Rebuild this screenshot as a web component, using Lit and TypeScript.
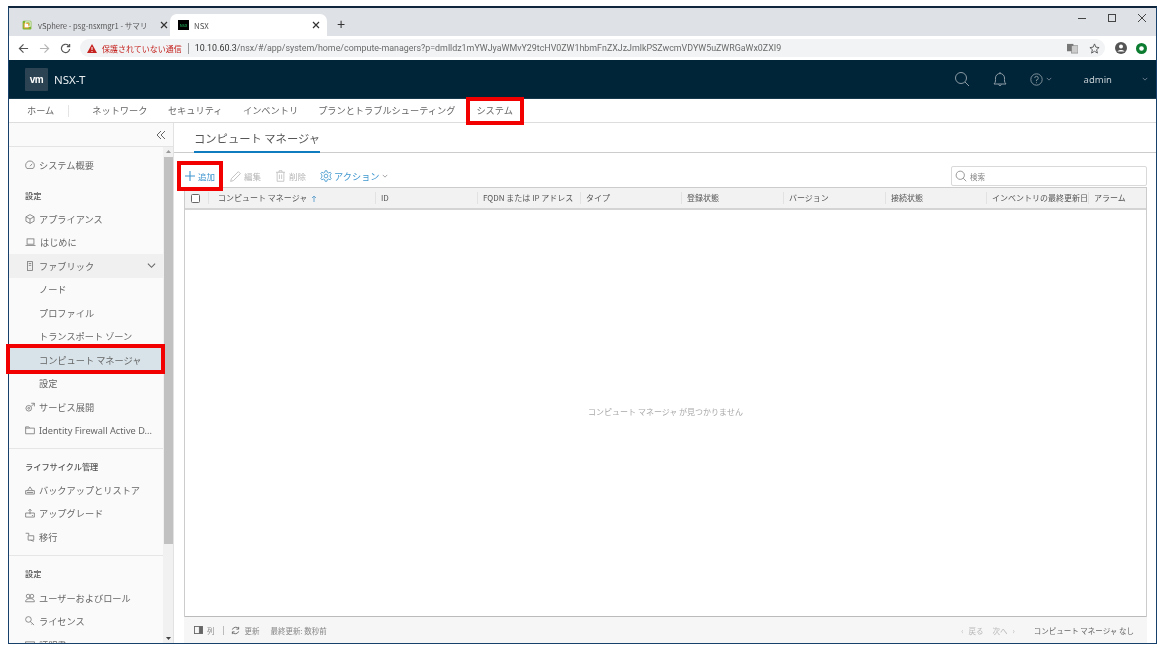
import { LitElement, html, css } from "lit";
import { customElement } from "lit/decorators.js";

const icons = {
  gauge: html`<svg class="ic" width="10" height="10" viewBox="0 0 16 16" fill="none" stroke="currentColor" stroke-width="1.3"><path d="M3 13.5A7 7 0 1 1 13 13.5Z"/><path d="M8 10 L11.5 6"/></svg>`,
  box: html`<svg class="ic" width="10" height="10" viewBox="0 0 16 16" fill="none" stroke="currentColor" stroke-width="1.3"><path d="M8 1 14.5 4.5V11.5L8 15 1.5 11.5V4.5Z"/><path d="M1.5 4.5 8 8 14.5 4.5M8 8V15"/></svg>`,
  laptop: html`<svg class="ic" width="11" height="10" viewBox="0 0 16 16" fill="none" stroke="currentColor" stroke-width="1.3"><rect x="2.5" y="3" width="11" height="8.5"/><path d="M0 13.5H16"/></svg>`,
  fabric: html`<svg class="ic" width="10" height="10" viewBox="0 0 16 16" fill="none" stroke="currentColor" stroke-width="1.3"><rect x="4" y="1" width="8" height="14"/><path d="M6 4H10M6 7H10M8 12V12.5"/></svg>`,
  svc: html`<svg class="ic" width="10" height="10" viewBox="0 0 16 16" fill="none" stroke="currentColor" stroke-width="1.3"><circle cx="6" cy="10" r="4.5"/><circle cx="6" cy="10" r="1.5"/><path d="M10 2H15V7M15 2 10 7"/></svg>`,
  folder: html`<svg class="ic" width="10" height="10" viewBox="0 0 16 16" fill="none" stroke="currentColor" stroke-width="1.3"><path d="M1 3H6L7.5 5H15V14H1Z"/><path d="M1 5H7.5"/></svg>`,
  backup: html`<svg class="ic" width="10" height="10" viewBox="0 0 16 16" fill="none" stroke="currentColor" stroke-width="1.3"><path d="M1 9H15V14.5H1Z"/><path d="M4 9 8 3 12 9M3 12H13"/></svg>`,
  upgrade: html`<svg class="ic" width="10" height="10" viewBox="0 0 16 16" fill="none" stroke="currentColor" stroke-width="1.3"><path d="M1 8H15V14.5H1Z"/><path d="M8 2V10M5.5 4.5 8 2 10.5 4.5M11 12H13"/></svg>`,
  migrate: html`<svg class="ic" width="10" height="10" viewBox="0 0 16 16" fill="none" stroke="currentColor" stroke-width="1.3"><path d="M1 2H6V5M5 6H14V13H5ZM9 13 14 15"/></svg>`,
  users: html`<svg class="ic" width="10" height="10" viewBox="0 0 16 16" fill="none" stroke="currentColor" stroke-width="1.3"><circle cx="5" cy="5" r="3"/><circle cx="11" cy="5" r="3"/><path d="M1 14C1 10 4 9 8 9S15 10 15 14Z"/></svg>`,
  key: html`<svg class="ic" width="10" height="10" viewBox="0 0 16 16" fill="none" stroke="currentColor" stroke-width="1.3"><circle cx="5.5" cy="5.5" r="4.5"/><path d="M8.5 9 14.5 14.5M12 12 10.5 13.5"/></svg>`,
  cert: html`<svg class="ic" width="10" height="10" viewBox="0 0 16 16" fill="none" stroke="currentColor" stroke-width="1.3"><rect x="1" y="3" width="14" height="10"/></svg>`,
};

const closeX = html`<svg class="x" width="8" height="8" viewBox="0 0 8 8" fill="none" stroke="#333" stroke-width="1.2"><path d="M1 1 7 7M7 1 1 7"/></svg>`;

type Row = { t: string; i?: unknown; cls?: string; chev?: boolean };
const rows: Row[] = [
  { t: "システム概要", i: icons.gauge },
  { t: "設定", cls: "head gap" },
  { t: "アプライアンス", i: icons.box },
  { t: "はじめに", i: icons.laptop },
  { t: "ファブリック", i: icons.fabric, cls: "open", chev: true },
  { t: "ノード", cls: "sub" },
  { t: "プロファイル", cls: "sub" },
  { t: "トランスポート ゾーン", cls: "sub" },
  { t: "コンピュート マネージャ", cls: "sub on" },
  { t: "設定", cls: "sub" },
  { t: "サービス展開", i: icons.svc },
  { t: "Identity Firewall Active D...", i: icons.folder, cls: "latin" },
  { t: "ライフサイクル管理", cls: "head rule" },
  { t: "バックアップとリストア", i: icons.backup },
  { t: "アップグレード", i: icons.upgrade },
  { t: "移行", i: icons.migrate },
  { t: "設定", cls: "head rule two" },
  { t: "ユーザーおよびロール", i: icons.users },
  { t: "ライセンス", i: icons.key },
  { t: "証明書", i: icons.cert },
];

const cols = ["ID", "FQDN または IP アドレス", "タイプ", "登録状態", "バージョン", "接続状態", "インベントリの最終更新日", "アラーム"];

@customElement("app-root")
export class AppRoot extends LitElement {
  static styles = css`
    :host { display: block; width: 1165px; height: 652px; background: #fff; position: relative; overflow: hidden;
      font-family: "Noto Sans CJK JP", "Noto Sans", sans-serif; color: #565656; }
    * { box-sizing: border-box; }
    .page { padding: 6px 8px 8px; height: 652px; }
    .win { height: 638px; display: flex; flex-direction: column; border: 1px solid #17406a; border-top: 2px solid #10263c; overflow: hidden; filter: blur(0.4px); background: #fff; }
    .ic { flex: none; display: block; }

    .tabs { height: 28px; background: #dee1e6; display: flex; align-items: flex-end; flex: none; padding-left: 4px; }
    .tab { height: 22px; display: flex; align-items: center; font-size: 7.6px; color: #555; white-space: nowrap; }
    .tab.a { width: 161px; padding: 0 0 0 9px; }
    .tab.b { width: 157px; background: #fff; border-radius: 7px 7px 0 0; padding: 0 0 0 8px; margin-left: -4px; font-size: 7.8px; }
    .fav { width: 10px; height: 10px; margin-right: 6px; flex: none; }
    .fav.n { background: #000; width: 11px; height: 10px; margin-right: 5px; color: #2c6; font-size: 4px; line-height: 10px; text-align: center; overflow: hidden; }
    .tab .x { margin-left: auto; flex: none; }
    .tab.a .x { margin-right: 6px; }
    .tab.b .x { margin-right: 7px; }
    .plus { font-size: 14px; color: #333; margin: 0 0 3px 10px; line-height: 18px; font-family: "Liberation Sans", sans-serif; }
    .winbtns { margin-left: auto; display: flex; align-self: stretch; align-items: flex-start; gap: 20px; padding: 5px 9px 0 0; color: #444; }

    .addr { height: 24px; flex: none; display: flex; align-items: center; padding-left: 9px; background: #fff; color: #666; }
    .navi { display: flex; gap: 10px; align-items: center; width: 62px; }
    .pill { width: 1025px; height: 18px; border-radius: 9px; background: #f1f3f4; display: flex; align-items: center; padding: 0 0 0 7px; font-size: 8.9px; font-family: "Roboto", "Noto Sans CJK JP", sans-serif; color: #6a6a6a; white-space: nowrap; }
    .warn { color: #c5221f; font-size: 8px; margin: 0 6px 0 5px; font-family: "Noto Sans CJK JP", sans-serif; }
    .sep { width: 1px; height: 11px; background: #999; margin-right: 6px; }
    .host { color: #333; }
    .pill .end { margin-left: auto; display: flex; gap: 11px; align-items: center; padding-right: 5px; color: #555; }
    .prof { margin-left: 10px; display: flex; gap: 9px; align-items: center; }

    .hdr { height: 39px; flex: none; background: #002538; border-bottom: 1px solid #16394c; display: flex; align-items: center; padding-left: 16px; color: #fff; }
    .logo { width: 23px; height: 23px; background: #2b4352; border-radius: 1px; font: 700 10px/23px "Liberation Sans", sans-serif; text-align: center; letter-spacing: -0.5px; }
    .brand { font: 11.5px "Noto Sans", sans-serif; margin-left: 6px; color: #e8edf0; }
    .hr { margin-left: auto; display: flex; align-items: center; color: #8c9ba5; }
    .hr .user { font: 9.5px "Noto Sans", sans-serif; margin: 0 0 0 32px; color: #c5ced4; }
    .ml22 { margin-left: 22px; }
    .ml3 { margin-left: 3px; }
    .last { margin: 0 8px 0 30px; }

    .nav { height: 24px; flex: none; display: flex; align-items: stretch; border-bottom: 1px solid #ddd; background: #fff; padding-left: 18px; font-size: 9.2px; color: #666; }
    .nav span { display: flex; align-items: center; margin-right: 21px; white-space: nowrap; border-bottom: 1px solid transparent; }
    .nav .home { padding-right: 15px; margin-right: 23px; position: relative; }
    .nav .home::after { content: ""; position: absolute; right: 0; top: 6px; height: 12px; width: 1px; background: #e4e4e4; }
    .nav .net { margin-right: 20.5px; }
    .nav .sec { margin-right: 20.5px; }
    .nav .inv { margin-right: 20px; }
    .nav .sel { border-bottom: 1px solid #6da7d0; padding: 0 2px; margin-left: -2px; }

    .body { flex: 1; min-height: 0; display: flex; }
    .side { width: 165px; flex: none; background: #fafafa; border-right: 1px solid #e2e2e2; display: flex; flex-direction: column; }
    .col { height: 24px; flex: none; border-bottom: 1px solid #e4e4e4; display: flex; justify-content: flex-end; align-items: center; padding-right: 7px; color: #666; }
    .sc { flex: 1; min-height: 0; display: flex; }
    .list { flex: 1; min-width: 0; padding-top: 6.5px; font-size: 9.2px; overflow: hidden; }
    .r { height: 23.5px; display: flex; align-items: center; padding-left: 16px; gap: 4px; white-space: nowrap; color: #666; }
    .r .ic { color: #777; }
    .r.sub { padding-left: 30px; }
    .r.head { font-size: 8.2px; font-weight: 500; color: #555; }
    .r.head.gap { margin-top: 6.5px; }
    .r.head.rule { margin-top: 11.5px; height: 24.5px; position: relative; }
    .r.head.rule.two { margin-top: 12px; height: 25.5px; }
    .r.head.rule::before { content: ""; position: absolute; left: 0; right: 0; top: -6px; height: 1px; background: #e6e6e6; }
    .r.open { background: #f0f0f0; padding-right: 7px; }
    .r.on { background: #d8e3e9; }
    .r.latin { font-family: "Noto Sans", sans-serif; font-size: 9.2px; }
    .r .chev { margin-left: auto; color: #666; }
    .sb { width: 10px; flex: none; background: #f1f1f1; display: flex; flex-direction: column; align-items: center; }
    .sb .arr { height: 10px; flex: none; }
    .sb .th { width: 9px; height: 387px; background: #c1c1c1; }
    .sb .sp { flex: 1; }

    .main { flex: 1; min-width: 0; display: flex; flex-direction: column; background: #fff; padding-top: 6px; }
    .tb { height: 24px; flex: none; border-bottom: 1px solid #ccc; padding-left: 20px; display: flex; }
    .tb span { font-size: 11.3px; color: #565656; border-bottom: 2px solid #0f7cc0; height: 24px; line-height: 18px; margin-bottom: -1px; white-space: nowrap; width: 126px; }
    .tools { height: 34px; flex: none; display: flex; align-items: center; padding: 13px 9px 1px 11px; font-size: 8.5px; gap: 14px; }
    .t { display: flex; align-items: center; gap: 3px; color: #b5b5b5; white-space: nowrap; }
    .t.e { gap: 2px; }
    .t.blue { color: #3f96cf; }
    .t.act { font-size: 9.2px; gap: 2px; }
    .search { margin-left: auto; width: 196px; height: 20px; border: 1px solid #d9d9d9; border-radius: 2px; display: flex; align-items: center; padding-left: 3px; gap: 3px; color: #888; font-size: 7.5px; }
    .grid { flex: 1; min-height: 0; margin: 0 9px 0 10px; border: 1px solid #ccc; border-bottom: none; display: flex; flex-direction: column; }
    .gh { height: 22px; flex: none; background: #f2f2f2; border-bottom: 2px solid #d4d4d4; display: grid; grid-template-columns: 23px 167px 102px 103px 101px 102px 102px 101px 102px 1fr; align-items: center; font-size: 8px; color: #555; }
    .gh div { padding-left: 5px; border-left: 1px solid #e2e2e2; height: 12px; line-height: 12px; white-space: nowrap; display: flex; align-items: center; gap: 4px; }
    .gh div.cb { border: none; padding-left: 6px; }
    .gh div.first { padding-left: 9px; }
    .box { width: 9px; height: 9px; border: 1px solid #666; border-radius: 1.5px; background: #fff; }
    .sort { color: #6da7d0; }
    .empty { flex: 1; display: flex; align-items: center; justify-content: center; padding-bottom: 4px; font-size: 8px; color: #a8a8a8; background: #fff; border-bottom: 1px solid #bbb; }
    .ft { height: 26px; flex: none; margin: 0 9px 0 10px; background: #f6f6f6; display: flex; align-items: center; font-size: 7.5px; color: #888; padding: 0 13px 0 10px; white-space: nowrap; }
    .ft .ic { color: #666; }
    .ft .m4 { margin-left: 4px; }
    .ft .m5 { margin-left: 5px; }
    .ft .m11 { margin-left: 11px; }
    .ft .bar { width: 1px; height: 9px; background: #bbb; margin: 0 7px 0 8px; }
    .ft .pg { margin-left: auto; display: flex; align-items: center; color: #b9b9b9; gap: 5px; }
    .ft .tot { color: #666; font-size: 7.5px; margin-left: 19px; }

    .mark { position: absolute; border: 4px solid #f20000; pointer-events: none; }
    .m1 { left: 466px; top: 97px; width: 58px; height: 28px; }
    .m2 { left: 6px; top: 344px; width: 159px; height: 30px; }
    .m3 { left: 177px; top: 161px; width: 46px; height: 30px; }
  `;

  render() {
    return html`
      <div class="page"><div class="win">
        <div class="tabs">
          <div class="tab a">
            <svg class="fav" viewBox="0 0 16 16" fill="none"><rect x="1" y="1" width="14" height="14" rx="2" fill="#7ab52f"/><rect x="3.5" y="5.5" width="7" height="7" fill="#fff" stroke="#e9a23b" stroke-width="1.5"/><rect x="6" y="3" width="7" height="7" fill="none" stroke="#fff" stroke-width="1.5"/></svg>
            vSphere - psg-nsxmgr1 - サマリ${closeX}
          </div>
          <div class="tab b"><span class="fav n">NSX</span>NSX${closeX}</div>
          <div class="plus">+</div>
          <div class="winbtns">
            <svg width="10" height="10" viewBox="0 0 10 10" stroke="currentColor" fill="none"><path d="M1 5.5H9"/></svg>
            <svg width="10" height="10" viewBox="0 0 10 10" stroke="currentColor" fill="none"><rect x="1.5" y="1.5" width="7" height="7"/></svg>
            <svg width="10" height="10" viewBox="0 0 10 10" stroke="currentColor" fill="none"><path d="M1 1 9 9M9 1 1 9"/></svg>
          </div>
        </div>
        <div class="addr">
          <div class="navi">
            <svg width="11" height="11" viewBox="0 0 12 12" fill="none" stroke="#555" stroke-width="1.3"><path d="M11 6H1.5M6 1.5 1.5 6 6 10.5"/></svg>
            <svg width="11" height="11" viewBox="0 0 12 12" fill="none" stroke="#b5b5b5" stroke-width="1.3"><path d="M1 6H10.5M6 1.5 10.5 6 6 10.5"/></svg>
            <svg width="11" height="11" viewBox="0 0 12 12" fill="none" stroke="#555" stroke-width="1.3"><path d="M10.5 6.5A4.5 4.5 0 1 1 9 2.5"/><path d="M10.5 1V4H7.5" fill="#555"/></svg>
          </div>
          <div class="pill">
            <svg width="10" height="9" viewBox="0 0 10 9"><path d="M5 0 10 9H0Z" fill="#c5221f"/><path d="M5 3V6M5 7V8" stroke="#fff"/></svg>
            <span class="warn">保護されていない通信</span><span class="sep"></span>
            <span><span class="host">10.10.60.3</span>/nsx/#/app/system/home/compute-managers?p=dmlldz1mYWJyaWMvY29tcHV0ZW1hbmFnZXJzJmlkPSZwcmVDYW5uZWRGaWx0ZXI9</span>
            <span class="end">
              <svg width="11" height="11" viewBox="0 0 12 12"><rect x="0" y="1" width="7" height="8" fill="#777"/><rect x="5" y="3" width="7" height="8" fill="#ccc" stroke="#777" stroke-width=".6"/></svg>
              <svg width="11" height="11" viewBox="0 0 12 12" fill="none" stroke="#555"><path d="M6 1 7.5 4.5 11 5 8.3 7.3 9.2 11 6 9 2.8 11 3.7 7.3 1 5 4.5 4.5Z"/></svg>
            </span>
          </div>
          <div class="prof">
            <svg width="12" height="12" viewBox="0 0 12 12"><circle cx="6" cy="6" r="6" fill="#555"/><circle cx="6" cy="4.5" r="2" fill="#fff"/><path d="M2.5 9.5C3.5 7.5 8.5 7.5 9.5 9.5Z" fill="#fff"/></svg>
            <svg width="11" height="11" viewBox="0 0 12 12"><circle cx="6" cy="6" r="6" fill="#0c7c30"/><circle cx="6" cy="6" r="2.5" fill="#fff"/></svg>
          </div>
        </div>
        <div class="hdr">
          <div class="logo">vm</div><div class="brand">NSX-T</div>
          <div class="hr">
            <svg width="16" height="16" viewBox="0 0 16 16" fill="none" stroke="currentColor" stroke-width="1"><circle cx="7" cy="7" r="5.5"/><path d="M11 11 15 15"/></svg>
            <svg class="ml22" width="16" height="16" viewBox="0 0 16 16" fill="none" stroke="currentColor" stroke-width="1"><path d="M2 13C4 11 3.5 9 3.5 7A4.5 4.5 0 0 1 12.5 7C12.5 9 12 11 14 13Z"/><path d="M6.5 13.5A1.6 1.6 0 0 0 9.5 13.5"/><path d="M8 1V2.5"/></svg>
            <svg class="ml22" width="13" height="13" viewBox="0 0 16 16" fill="none" stroke="currentColor" stroke-width="1.1"><circle cx="8" cy="8" r="7"/><path d="M5.8 6.2A2.2 2.2 0 1 1 8 8.5V10M8 11.5V12.5"/></svg>
            <svg class="ml3" width="6" height="6" viewBox="0 0 8 8" fill="none" stroke="currentColor"><path d="M1 2.5 4 5.5 7 2.5"/></svg>
            <span class="user">admin</span>
            <svg class="last" width="6" height="6" viewBox="0 0 8 8" fill="none" stroke="currentColor"><path d="M1 2.5 4 5.5 7 2.5"/></svg>
          </div>
        </div>
        <div class="nav">
          <span class="home">ホーム</span><span class="net">ネットワーク</span><span class="sec">セキュリティ</span><span class="inv">インベントリ</span><span>プランとトラブルシューティング</span><span class="sel">システム</span>
        </div>
        <div class="body">
          <div class="side">
            <div class="col"><svg width="10" height="10" viewBox="0 0 10 10" fill="none" stroke="currentColor"><path d="M5 1 1 5 5 9M9 1 5 5 9 9"/></svg></div>
            <div class="sc">
              <div class="list">
                ${rows.map((r) => html`<div class="r ${r.cls ?? ""}">${r.i ?? ""}<span>${r.t}</span>${r.chev ? html`<svg class="chev ic" width="9" height="9" viewBox="0 0 10 10" fill="none" stroke="currentColor" stroke-width="1.2"><path d="M1 3 5 7 9 3"/></svg>` : ""}</div>`)}
              </div>
              <div class="sb">
                <svg class="arr" width="9" height="10" viewBox="0 0 9 10"><path d="M4.5 3 7 6H2Z" fill="#999"/></svg>
                <div class="th"></div><div class="sp"></div>
                <svg class="arr" width="9" height="10" viewBox="0 0 9 10"><path d="M4.5 7 7 4H2Z" fill="#444"/></svg>
              </div>
            </div>
          </div>
          <div class="main">
            <div class="tb"><span>コンピュート マネージャ</span></div>
            <div class="tools">
              <div class="t blue"><svg width="10" height="10" viewBox="0 0 10 10" stroke="currentColor" stroke-width="1.1"><path d="M5 0V10M0 5H10"/></svg>追加</div>
              <div class="t e"><svg width="13" height="13" viewBox="0 0 16 16" fill="none" stroke="currentColor"><path d="M2 14 3 10.5 11.5 2 14 4.5 5.5 13Z"/></svg>編集</div>
              <div class="t"><svg width="11" height="12" viewBox="0 0 14 16" fill="none" stroke="currentColor"><path d="M1 3H13M5 3V1H9V3M2.5 3V15H11.5V3M5.5 6V12M8.5 6V12"/></svg>削除</div>
              <div class="t blue act"><svg width="12" height="12" viewBox="0 0 16 16" fill="none" stroke="currentColor" stroke-width="1.1"><circle cx="8" cy="8" r="2.5"/><path d="M6.8 1H9.2L9.7 3.1 11.6 4 13.5 2.9 15 5 13.5 6.5V9.5L15 11 13.5 13.1 11.6 12 9.7 12.9 9.2 15H6.8L6.3 12.9 4.4 12 2.5 13.1 1 11 2.5 9.5V6.5L1 5 2.5 2.9 4.4 4 6.3 3.1Z"/></svg>アクション<svg width="6" height="6" viewBox="0 0 8 8" fill="none" stroke="#888"><path d="M1 2.5 4 5.5 7 2.5"/></svg></div>
              <div class="search"><svg width="12" height="12" viewBox="0 0 16 16" fill="none" stroke="#777"><circle cx="7" cy="7" r="5.5"/><path d="M11 11 15 15"/></svg>検索</div>
            </div>
            <div class="grid">
              <div class="gh">
                <div class="cb"><span class="box"></span></div>
                <div class="first">コンピュート マネージャ<svg class="sort" width="6" height="7" viewBox="0 0 6 7" fill="none" stroke="currentColor"><path d="M3 7V1M1 3 3 1 5 3"/></svg></div>
                ${cols.map((c) => html`<div>${c}</div>`)}
              </div>
              <div class="empty">コンピュート マネージャ が見つかりません</div>
            </div>
            <div class="ft">
              <svg class="ic" width="9" height="8" viewBox="0 0 10 9" fill="none" stroke="currentColor"><rect x=".5" y=".5" width="9" height="8"/><rect x="6" y="1" width="3" height="7" fill="currentColor"/></svg>
              <span class="m4">列</span><span class="bar"></span>
              <svg class="ic" width="9" height="9" viewBox="0 0 10 10" fill="none" stroke="currentColor"><path d="M1.5 4A4 4 0 0 1 8.5 3M8.5 6A4 4 0 0 1 1.5 7M8.5 1V3.5H6M1.5 9V6.5H4"/></svg>
              <span class="m5">更新</span>
              <span class="m11">最終更新: 数秒前</span>
              <div class="pg"><span>‹</span><span>戻る</span><span class="m4">次へ</span><span>›</span></div>
              <span class="tot">コンピュート マネージャ なし</span>
            </div>
          </div>
        </div>
      </div></div>
      <div class="mark m1"></div><div class="mark m2"></div><div class="mark m3"></div>
    `;
  }
}
